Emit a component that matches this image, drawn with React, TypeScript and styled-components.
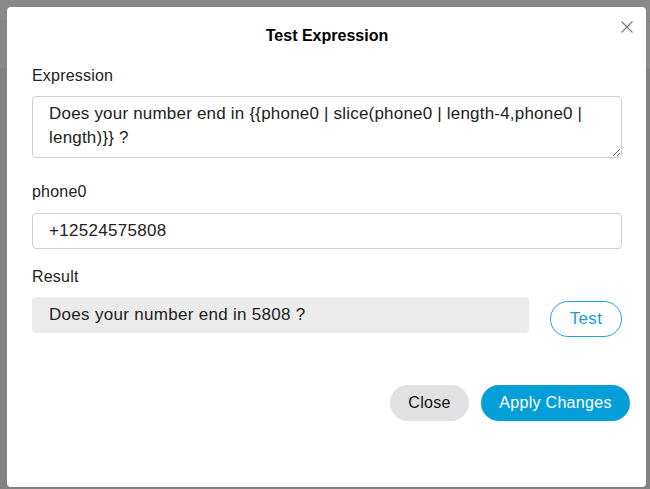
import React from "react";
import styled, { createGlobalStyle } from "styled-components";

const Global = createGlobalStyle`
  html, body { margin: 0; padding: 0; }
  body {
    width: 650px;
    height: 489px;
    overflow: hidden;
    background: #828282;
    font-family: "Liberation Sans", Arial, sans-serif;
  }
`;

const Backdrop = styled.div`
  position: relative;
  width: 650px;
  height: 489px;
  box-sizing: border-box;
  padding: 7px 4px 2px 7px;
  background: linear-gradient(
    to bottom,
    #898989 0px,
    #898989 21px,
    #7f7f7f 21px,
    #7f7f7f 22px,
    #898989 22px,
    #898989 69px,
    #7d7d7d 69px,
    #7d7d7d 70px,
    #828282 70px
  );
`;

const Modal = styled.div`
  position: relative;
  width: 639px;
  height: 480px;
  background: #fff;
  border-radius: 4px;
  box-sizing: border-box;
  padding: 0 24px 0 25px;
  display: flex;
  flex-direction: column;
  color: #111;
`;

const Title = styled.h2`
  margin: 0;
  padding-top: 19px;
  height: 29px;
  text-align: center;
  font-size: 16px;
  font-weight: 700;
  line-height: 19px;
  color: #000;
`;

const CloseX = styled.button`
  position: absolute;
  top: 13px;
  right: 12px;
  width: 14px;
  height: 14px;
  padding: 0;
  border: 0;
  background: transparent;
  cursor: pointer;
  display: flex;
`;

const Label = styled.div<{ $top: number }>`
  font-size: 16px;
  letter-spacing: 0.2px;
  line-height: 19px;
  color: #222;
  margin-top: ${(p) => p.$top}px;
`;

const TextArea = styled.textarea`
  margin-top: 11px;
  width: 590px;
  height: 62px;
  box-sizing: border-box;
  border: 1px solid #cfcfcf;
  border-radius: 4px;
  padding: 5px 14px 0 16px;
  font-family: "Liberation Sans", Arial, sans-serif;
  font-size: 17px;
  letter-spacing: 0.2px;
  line-height: 24px;
  color: #222;
  resize: vertical;
  outline: none;
`;

const Input = styled.input`
  margin-top: 12px;
  width: 590px;
  height: 36px;
  box-sizing: border-box;
  border: 1px solid #cfcfcf;
  border-radius: 4px;
  padding: 0 16px;
  font-family: "Liberation Sans", Arial, sans-serif;
  font-size: 17px;
  letter-spacing: 0.3px;
  color: #222;
  outline: none;
`;

const ResultRow = styled.div`
  margin-top: 11px;
  display: flex;
  align-items: flex-start;
  gap: 21px;
`;

const ResultBox = styled.div`
  width: 497px;
  height: 36px;
  box-sizing: border-box;
  background: #ebebeb;
  border-radius: 4px;
  padding: 0 16px 0 17px;
  display: flex;
  align-items: center;
  font-size: 17px;
  letter-spacing: 0.3px;
  color: #222;
`;

const Pill = styled.button<{ $variant: "outline" | "gray" | "primary"; $w: number }>`
  width: ${(p) => p.$w}px;
  height: 36px;
  box-sizing: border-box;
  border-radius: 18px;
  font-family: "Liberation Sans", Arial, sans-serif;
  font-size: ${(p) => (p.$variant === "outline" ? 17 : 16)}px;
  letter-spacing: 0.3px;
  cursor: pointer;
  padding: 0;
  border: 1px solid
    ${(p) => (p.$variant === "outline" ? "#1fa6d6" : "transparent")};
  background: ${(p) =>
    p.$variant === "primary"
      ? "#049fd9"
      : p.$variant === "gray"
      ? "#e1e1e1"
      : "#fff"};
  color: ${(p) =>
    p.$variant === "primary"
      ? "#fff"
      : p.$variant === "gray"
      ? "#111"
      : "#1a9fd3"};
`;

const TestButton = styled(Pill)`
  margin-top: 4px;
`;

const Footer = styled.div`
  margin-top: 48px;
  margin-right: -8px;
  display: flex;
  justify-content: flex-end;
  gap: 12px;
`;

export default function App() {
  return (
    <>
      <Global />
      <Backdrop>
        <Modal>
          <CloseX aria-label="Close">
            <svg width="14" height="14" viewBox="0 0 14 14">
              <path
                d="M1.5 1.5 L12.5 12.5 M12.5 1.5 L1.5 12.5"
                stroke="#777"
                strokeWidth="1.1"
                fill="none"
              />
            </svg>
          </CloseX>
          <Title>Test Expression</Title>
          <Label $top={11}>Expression</Label>
          <TextArea
            spellCheck={false}
            defaultValue="Does your number end in {{phone0 | slice(phone0 | length-4,phone0 | length)}} ?"
          />
          <Label $top={24}>phone0</Label>
          <Input defaultValue="+12524575808" />
          <Label $top={18}>Result</Label>
          <ResultRow>
            <ResultBox>Does your number end in 5808 ?</ResultBox>
            <TestButton $variant="outline" $w={72}>
              Test
            </TestButton>
          </ResultRow>
          <Footer>
            <Pill $variant="gray" $w={79}>
              Close
            </Pill>
            <Pill $variant="primary" $w={149}>
              Apply Changes
            </Pill>
          </Footer>
        </Modal>
      </Backdrop>
    </>
  );
}
